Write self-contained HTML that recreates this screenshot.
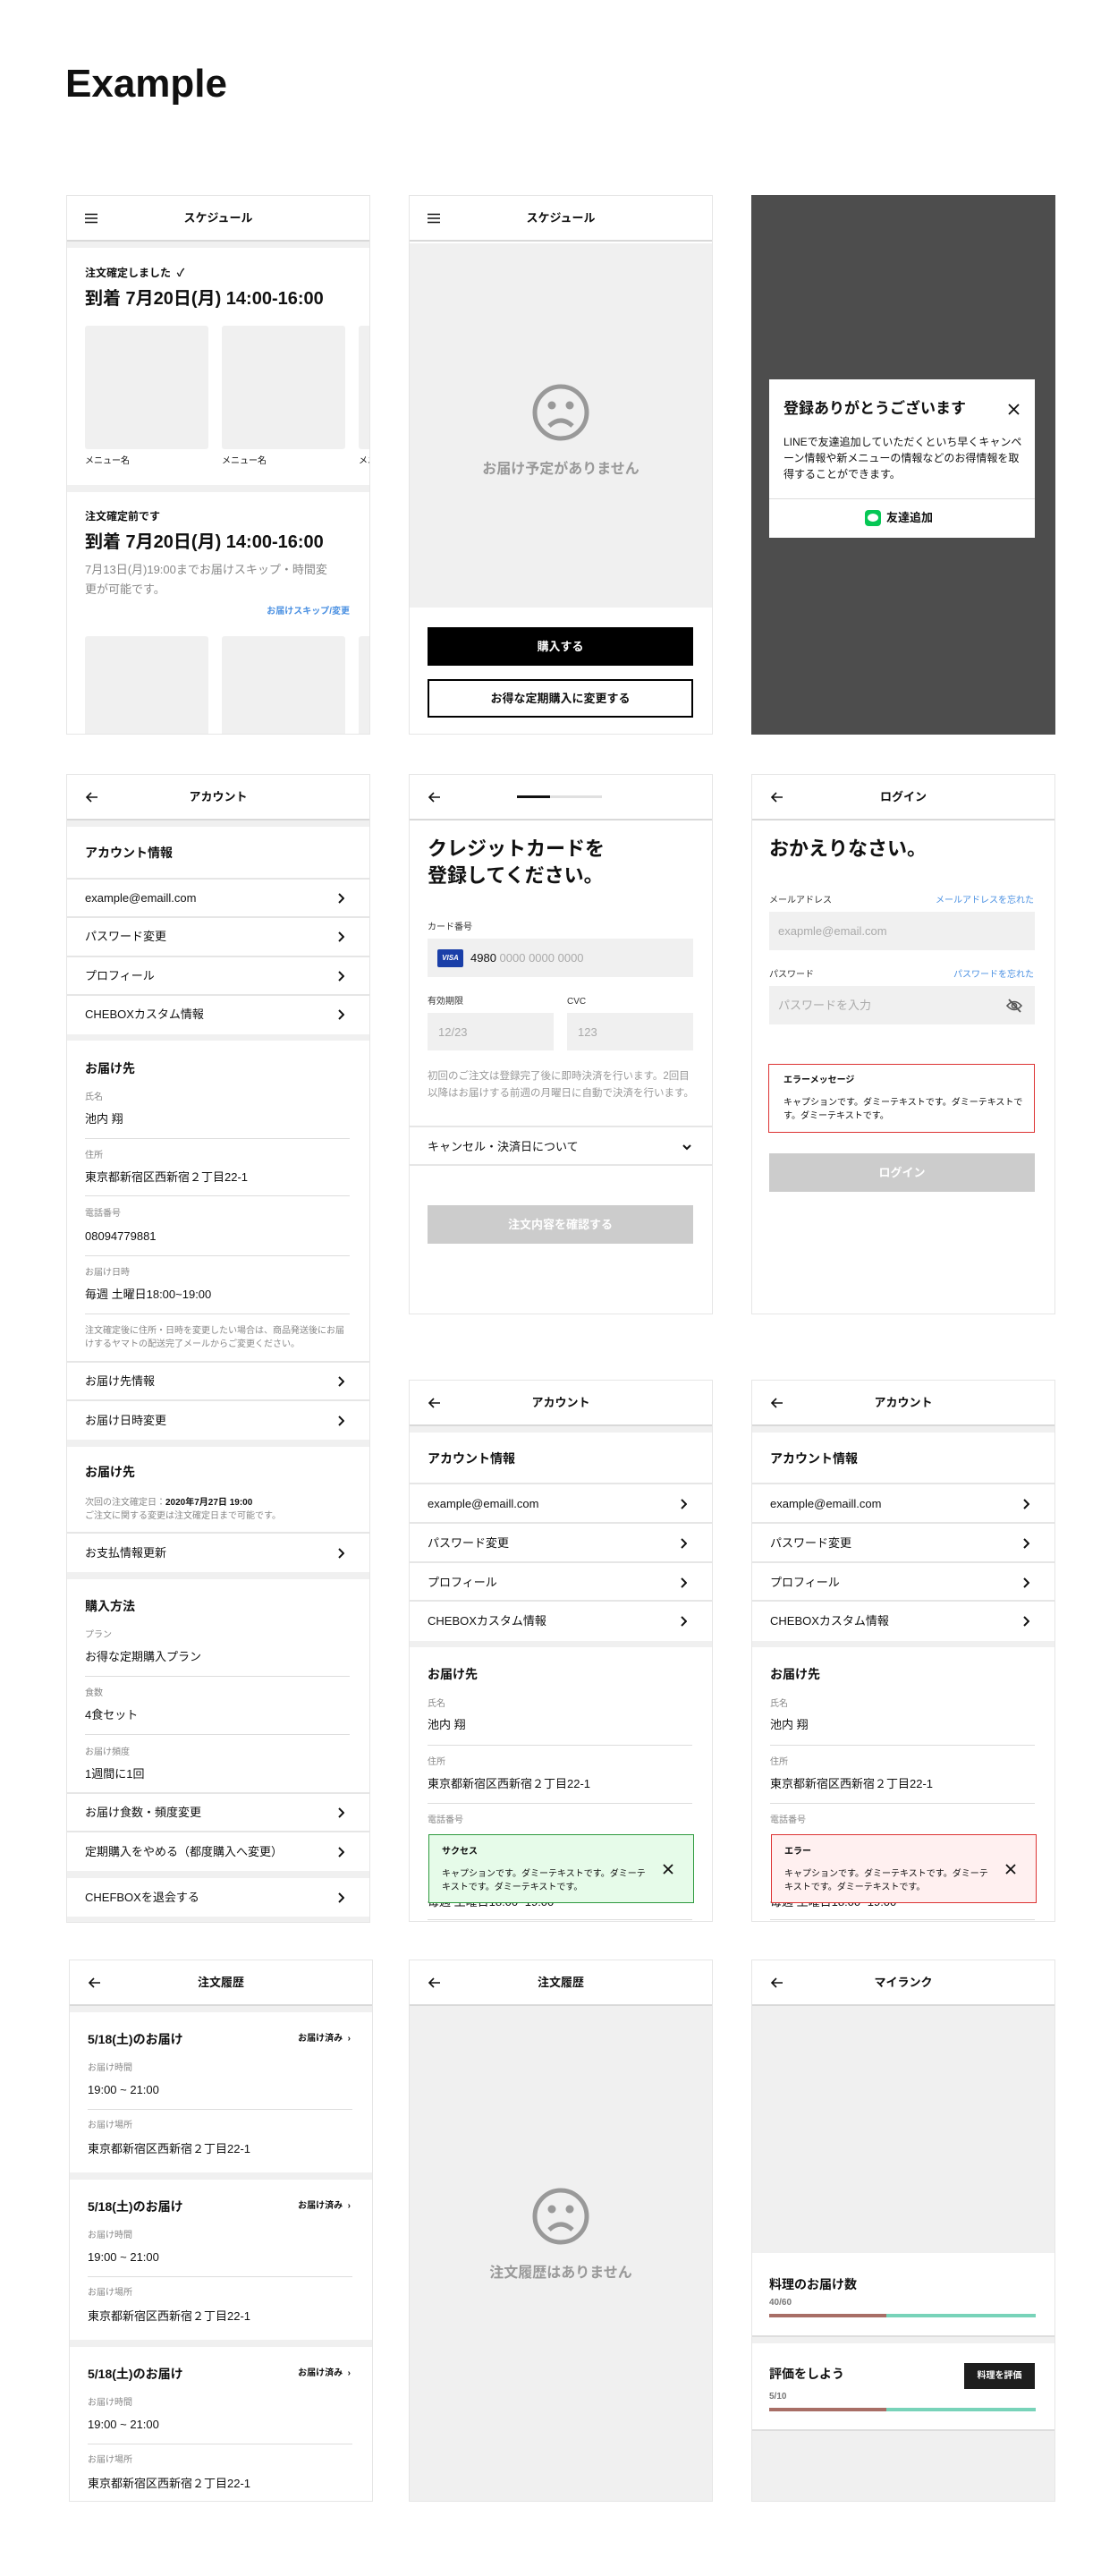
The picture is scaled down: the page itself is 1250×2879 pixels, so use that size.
<!DOCTYPE html>
<html><head><meta charset="utf-8">
<style>
*{margin:0;padding:0;box-sizing:border-box}
body{width:1250px;height:2879px;background:#fff;position:relative;font-family:"Liberation Sans","Noto Sans CJK JP",sans-serif;color:#111;overflow:hidden}
.p{position:absolute;width:340px;border:1px solid #e6e6e6;background:#f0f0f0;overflow:hidden}
.w{position:absolute;left:0;right:0;background:#fff}
.hd{position:absolute;left:0;right:0;top:0;height:51px;background:#fff;border-bottom:2px solid #d9d9d9}
.hd .tt{position:absolute;left:0;right:0;top:18px;text-align:center;font-size:13px;font-weight:bold;line-height:1}
.hd svg{position:absolute;left:20px;top:19px}
.t{position:absolute;white-space:nowrap;line-height:1}
.b{font-weight:bold}
.lb{font-size:10px;color:#888}
.v{font-size:13px}
.dv{position:absolute;left:20px;right:22px;height:1px;background:#ddd}
.fd{position:absolute;left:0;right:0;height:2px;background:#e6e6e6}
.ch{position:absolute;right:28px}
.box{position:absolute;background:#f0f0f0;border-radius:3px}
</style></head><body>

<div class="t b" style="left:73px;top:72px;font-size:44px">Example</div>

<!-- ROW 1 -->
<div class="p" style="left:74px;top:218px;height:603px">
 <div class="hd"><svg width="14" height="12"><path d="M0 1.5h14M0 6h14M0 10.5h14" stroke="#111" stroke-width="1.6"/></svg><div class="tt">スケジュール</div></div>
 <div class="w" style="top:58px;height:265px"></div>
 <div class="w" style="top:331px;height:280px"></div>
 <div class="t b" style="left:20px;top:80px;font-size:12px">注文確定しました&nbsp;&nbsp;✓</div>
 <div class="t b" style="left:20px;top:105px;font-size:20px">到着 7月20日(月) 14:00-16:00</div>
 <div class="box" style="left:20px;top:145px;width:138px;height:138px"></div>
 <div class="box" style="left:173px;top:145px;width:138px;height:138px"></div>
 <div class="box" style="left:326px;top:145px;width:138px;height:138px"></div>
 <div class="t" style="left:20px;top:292px;font-size:10px">メニュー名</div>
 <div class="t" style="left:173px;top:292px;font-size:10px">メニュー名</div>
 <div class="t" style="left:326px;top:292px;font-size:10px">メニュー名</div>
 <div class="t b" style="left:20px;top:352px;font-size:12px">注文確定前です</div>
 <div class="t b" style="left:20px;top:377px;font-size:20px">到着 7月20日(月) 14:00-16:00</div>
 <div class="t" style="left:20px;top:411px;font-size:13px;color:#888">7月13日(月)19:00までお届けスキップ・時間変</div>
 <div class="t" style="left:20px;top:433px;font-size:13px;color:#888">更が可能です。</div>
 <div class="t b" style="right:22px;top:460px;font-size:10px;color:#4a90e2">お届けスキップ/変更</div>
 <div class="box" style="left:20px;top:492px;width:138px;height:138px"></div>
 <div class="box" style="left:173px;top:492px;width:138px;height:138px"></div>
 <div class="box" style="left:326px;top:492px;width:138px;height:138px"></div>
</div>

<div class="p" style="left:457px;top:218px;height:603px;background:#fff">
 <div class="hd"><svg width="14" height="12"><path d="M0 1.5h14M0 6h14M0 10.5h14" stroke="#111" stroke-width="1.6"/></svg><div class="tt">スケジュール</div></div>
 <div style="position:absolute;left:0;right:0;top:53px;height:407px;background:#f0f0f0"></div>
 <svg style="position:absolute;left:137px;top:210px" width="64" height="64"><circle cx="32" cy="32" r="29" fill="none" stroke="#999" stroke-width="5"/><circle cx="22" cy="24" r="4.5" fill="#999"/><circle cx="42" cy="24" r="4.5" fill="#999"/><path d="M19 47q13-12 26 0" fill="none" stroke="#999" stroke-width="5"/></svg>
 <div class="t b" style="left:0;right:0;text-align:center;top:298px;font-size:16px;color:#999">お届け予定がありません</div>
 <div class="t b" style="left:20px;width:297px;top:482px;height:43px;line-height:43px;background:#000;color:#fff;text-align:center;font-size:13px">購入する</div>
 <div class="t b" style="left:20px;width:297px;top:540px;height:43px;line-height:39px;border:2px solid #000;text-align:center;font-size:13px">お得な定期購入に変更する</div>
</div>

<div class="p" style="left:840px;top:218px;height:603px;background:#4d4d4d;border-color:#4d4d4d">
 <div style="position:absolute;left:19px;top:205px;width:297px;height:177px;background:#fff">
  <div class="t b" style="left:16px;top:24px;font-size:17px">登録ありがとうございます</div>
  <svg style="position:absolute;right:17px;top:27px" width="13" height="13"><path d="M1 1l11 11M12 1L1 12" stroke="#111" stroke-width="1.8"/></svg>
  <div style="position:absolute;left:16px;right:14px;top:61px;font-size:12px;line-height:18px">LINEで友達追加していただくといち早くキャンペーン情報や新メニューの情報などのお得情報を取得することができます。</div>
  <div style="position:absolute;left:0;right:0;top:133px;height:1px;background:#ddd"></div>
  <div style="position:absolute;left:107px;top:146px;width:18px;height:18px;border-radius:4px;background:#06c755"><div style="position:absolute;left:3px;top:4px;width:12px;height:9px;border-radius:50%;background:#fff"></div></div>
  <div class="t b" style="left:131px;top:148px;font-size:13px">友達追加</div>
 </div>
</div>

<!-- ROW 2 -->
<div class="p" style="left:74px;top:865px;height:1284px">
 <div class="hd"><svg width="14" height="12"><path d="M7 1L2 6l5 5M2 6h12" stroke="#111" stroke-width="1.6" fill="none"/></svg><div class="tt">アカウント</div></div>
 <div class="w" style="top:58px;height:232px"></div>
 <div class="t b" style="left:20px;top:80px;font-size:14px">アカウント情報</div>
 <div class="fd" style="top:115px"></div><div class="fd" style="top:158px"></div><div class="fd" style="top:202px"></div><div class="fd" style="top:245px"></div>
 <div class="t v" style="left:20px;top:131px">example@emaill.com</div>
 <div class="t v" style="left:20px;top:174px">パスワード変更</div>
 <div class="t v" style="left:20px;top:218px">プロフィール</div>
 <div class="t v" style="left:20px;top:261px">CHEBOXカスタム情報</div>
 <svg class="ch" style="top:132px" width="8" height="12"><path d="M2 1l5 5-5 5" stroke="#111" stroke-width="2" fill="none"/></svg>
 <svg class="ch" style="top:175px" width="8" height="12"><path d="M2 1l5 5-5 5" stroke="#111" stroke-width="2" fill="none"/></svg>
 <svg class="ch" style="top:219px" width="8" height="12"><path d="M2 1l5 5-5 5" stroke="#111" stroke-width="2" fill="none"/></svg>
 <svg class="ch" style="top:262px" width="8" height="12"><path d="M2 1l5 5-5 5" stroke="#111" stroke-width="2" fill="none"/></svg>

 <div class="w" style="top:297px;height:446px"></div>
 <div class="t b" style="left:20px;top:321px;font-size:14px">お届け先</div>
 <div class="t lb" style="left:20px;top:356px">氏名</div><div class="t v" style="left:20px;top:378px">池内 翔</div><div class="dv" style="top:406px"></div>
 <div class="t lb" style="left:20px;top:421px">住所</div><div class="t v" style="left:20px;top:443px">東京都新宿区西新宿２丁目22-1</div><div class="dv" style="top:470px"></div>
 <div class="t lb" style="left:20px;top:486px">電話番号</div><div class="t v" style="left:20px;top:509px">08094779881</div><div class="dv" style="top:537px"></div>
 <div class="t lb" style="left:20px;top:552px">お届け日時</div><div class="t v" style="left:20px;top:574px">毎週 土曜日18:00~19:00</div><div class="dv" style="top:602px"></div>
 <div class="t lb" style="left:20px;top:617px">注文確定後に住所・日時を変更したい場合は、商品発送後にお届</div>
 <div class="t lb" style="left:20px;top:632px">けするヤマトの配送完了メールからご変更ください。</div>
 <div class="fd" style="top:655px"></div>
 <div class="t v" style="left:20px;top:671px">お届け先情報</div>
 <svg class="ch" style="top:672px" width="8" height="12"><path d="M2 1l5 5-5 5" stroke="#111" stroke-width="2" fill="none"/></svg>
 <div class="fd" style="top:698px"></div>
 <div class="t v" style="left:20px;top:715px">お届け日時変更</div>
 <svg class="ch" style="top:716px" width="8" height="12"><path d="M2 1l5 5-5 5" stroke="#111" stroke-width="2" fill="none"/></svg>

 <div class="w" style="top:751px;height:140px"></div>
 <div class="t b" style="left:20px;top:772px;font-size:14px">お届け先</div>
 <div class="t lb" style="left:20px;top:809px">次回の注文確定日：<b style="color:#111">2020年7月27日 19:00</b></div>
 <div class="t lb" style="left:20px;top:824px">ご注文に関する変更は注文確定日まで可能です。</div>
 <div class="fd" style="top:846px"></div>
 <div class="t v" style="left:20px;top:863px">お支払情報更新</div>
 <svg class="ch" style="top:864px" width="8" height="12"><path d="M2 1l5 5-5 5" stroke="#111" stroke-width="2" fill="none"/></svg>

 <div class="w" style="top:899px;height:326px"></div>
 <div class="t b" style="left:20px;top:922px;font-size:14px">購入方法</div>
 <div class="t lb" style="left:20px;top:957px">プラン</div><div class="t v" style="left:20px;top:979px">お得な定期購入プラン</div><div class="dv" style="top:1007px"></div>
 <div class="t lb" style="left:20px;top:1022px">食数</div><div class="t v" style="left:20px;top:1044px">4食セット</div><div class="dv" style="top:1072px"></div>
 <div class="t lb" style="left:20px;top:1088px">お届け頻度</div><div class="t v" style="left:20px;top:1110px">1週間に1回</div>
 <div class="fd" style="top:1137px"></div>
 <div class="t v" style="left:20px;top:1153px">お届け食数・頻度変更</div>
 <svg class="ch" style="top:1154px" width="8" height="12"><path d="M2 1l5 5-5 5" stroke="#111" stroke-width="2" fill="none"/></svg>
 <div class="fd" style="top:1180px"></div>
 <div class="t v" style="left:20px;top:1197px">定期購入をやめる（都度購入へ変更）</div>
 <svg class="ch" style="top:1198px" width="8" height="12"><path d="M2 1l5 5-5 5" stroke="#111" stroke-width="2" fill="none"/></svg>

 <div class="w" style="top:1233px;height:43px"></div>
 <div class="t v" style="left:20px;top:1248px">CHEFBOXを退会する</div>
 <svg class="ch" style="top:1249px" width="8" height="12"><path d="M2 1l5 5-5 5" stroke="#111" stroke-width="2" fill="none"/></svg>
</div>

<div class="p" style="left:457px;top:865px;height:604px;background:#fff">
 <div class="hd"><svg width="14" height="12"><path d="M7 1L2 6l5 5M2 6h12" stroke="#111" stroke-width="1.6" fill="none"/></svg>
  <div style="position:absolute;left:120px;top:23px;width:95px;height:3px;background:#e0e0e0"></div>
  <div style="position:absolute;left:120px;top:23px;width:37px;height:3px;background:#111"></div></div>
 <div class="t b" style="left:20px;top:72px;font-size:22px">クレジットカードを</div>
 <div class="t b" style="left:20px;top:102px;font-size:22px">登録してください。</div>
 <div class="t" style="left:20px;top:166px;font-size:10px;color:#333">カード番号</div>
 <div class="box" style="left:20px;top:183px;width:297px;height:43px;border-radius:0"></div>
 <div class="t b" style="left:31px;top:195px;width:29px;height:20px;line-height:20px;background:#1a3fa8;color:#fff;font-size:8px;text-align:center;border-radius:2px;font-style:italic">VISA</div>
 <div class="t" style="left:68px;top:198px;font-size:13px">4980 <span style="color:#aaa">0000 0000 0000</span></div>
 <div class="t" style="left:20px;top:249px;font-size:10px;color:#333">有効期限</div>
 <div class="t" style="left:176px;top:249px;font-size:10px;color:#333">CVC</div>
 <div class="box" style="left:20px;top:266px;width:141px;height:42px;border-radius:0"></div>
 <div class="box" style="left:176px;top:266px;width:141px;height:42px;border-radius:0"></div>
 <div class="t" style="left:32px;top:281px;font-size:13px;color:#aaa">12/23</div>
 <div class="t" style="left:188px;top:281px;font-size:13px;color:#aaa">123</div>
 <div style="position:absolute;left:20px;width:300px;top:328px;font-size:11.5px;line-height:18.5px;color:#999">初回のご注文は登録完了後に即時決済を行います。2回目以降はお届けする前週の月曜日に自動で決済を行います。</div>
 <div class="fd" style="top:392px"></div>
 <div class="t v" style="left:20px;top:409px">キャンセル・決済日について</div>
 <svg style="position:absolute;right:23px;top:413px" width="10" height="7"><path d="M1 1l4 4 4-4" stroke="#111" stroke-width="2" fill="none"/></svg>
 <div class="fd" style="top:435px"></div>
 <div class="t b" style="left:20px;width:297px;top:481px;height:43px;line-height:43px;background:#ccc;color:#fff;text-align:center;font-size:13px">注文内容を確認する</div>
</div>

<div class="p" style="left:840px;top:865px;height:604px;background:#fff">
 <div class="hd"><svg width="14" height="12"><path d="M7 1L2 6l5 5M2 6h12" stroke="#111" stroke-width="1.6" fill="none"/></svg><div class="tt">ログイン</div></div>
 <div class="t b" style="left:19px;top:72px;font-size:22px">おかえりなさい。</div>
 <div class="t" style="left:19px;top:136px;font-size:10px;color:#333">メールアドレス</div>
 <div class="t" style="right:23px;top:136px;font-size:10px;color:#4a90e2">メールアドレスを忘れた</div>
 <div class="box" style="left:19px;top:153px;width:297px;height:43px;border-radius:0"></div>
 <div class="t" style="left:29px;top:168px;font-size:13px;color:#aaa">exapmle@email.com</div>
 <div class="t" style="left:19px;top:219px;font-size:10px;color:#333">パスワード</div>
 <div class="t" style="right:23px;top:219px;font-size:10px;color:#4a90e2">パスワードを忘れた</div>
 <div class="box" style="left:19px;top:236px;width:297px;height:43px;border-radius:0"></div>
 <div class="t" style="left:29px;top:251px;font-size:13px;color:#aaa">パスワードを入力</div>
 <svg style="position:absolute;left:284px;top:250px" width="18" height="16"><path d="M1 8q8-9 16 0q-8 9-16 0z" fill="none" stroke="#555" stroke-width="1.6"/><circle cx="9" cy="8" r="2.6" fill="none" stroke="#555" stroke-width="1.6"/><path d="M3 1l13 14" stroke="#555" stroke-width="1.8"/></svg>
 <div style="position:absolute;left:18px;top:323px;width:298px;height:77px;border:1px solid #d33"></div>
 <div class="t b" style="left:35px;top:337px;font-size:10px">エラーメッセージ</div>
 <div style="position:absolute;left:35px;width:272px;top:359px;font-size:10px;line-height:15px">キャプションです。ダミーテキストです。ダミーテキストです。ダミーテキストです。</div>
 <div class="t b" style="left:19px;width:297px;top:423px;height:43px;line-height:43px;background:#ccc;color:#fff;text-align:center;font-size:13px">ログイン</div>
</div>

<!-- ROW 2b -->
<div class="p" style="left:457px;top:1542px;height:606px">
 <div class="hd"><svg width="14" height="12"><path d="M7 1L2 6l5 5M2 6h12" stroke="#111" stroke-width="1.6" fill="none"/></svg><div class="tt">アカウント</div></div>
 <div class="w" style="top:58px;height:233px"></div>
 <div class="t b" style="left:20px;top:80px;font-size:14px">アカウント情報</div>
 <div class="fd" style="top:114px"></div><div class="fd" style="top:158px"></div><div class="fd" style="top:202px"></div><div class="fd" style="top:245px"></div>
 <div class="t v" style="left:20px;top:131px">example@emaill.com</div>
 <div class="t v" style="left:20px;top:175px">パスワード変更</div>
 <div class="t v" style="left:20px;top:219px">プロフィール</div>
 <div class="t v" style="left:20px;top:262px">CHEBOXカスタム情報</div>
 <svg class="ch" style="top:132px" width="8" height="12"><path d="M2 1l5 5-5 5" stroke="#111" stroke-width="2" fill="none"/></svg>
 <svg class="ch" style="top:176px" width="8" height="12"><path d="M2 1l5 5-5 5" stroke="#111" stroke-width="2" fill="none"/></svg>
 <svg class="ch" style="top:220px" width="8" height="12"><path d="M2 1l5 5-5 5" stroke="#111" stroke-width="2" fill="none"/></svg>
 <svg class="ch" style="top:263px" width="8" height="12"><path d="M2 1l5 5-5 5" stroke="#111" stroke-width="2" fill="none"/></svg>
 <div class="w" style="top:298px;height:310px"></div>
 <div class="t b" style="left:20px;top:321px;font-size:14px">お届け先</div>
 <div class="t lb" style="left:20px;top:357px">氏名</div><div class="t v" style="left:20px;top:378px">池内 翔</div><div class="dv" style="top:407px"></div>
 <div class="t lb" style="left:20px;top:422px">住所</div><div class="t v" style="left:20px;top:444px">東京都新宿区西新宿２丁目22-1</div><div class="dv" style="top:472px"></div>
 <div class="t lb" style="left:20px;top:487px">電話番号</div>
 <div class="t v" style="left:20px;top:576px">毎週 土曜日18:00~19:00</div>
 <div class="dv" style="top:602px"></div>
 <div style="position:absolute;left:21px;top:507px;width:297px;height:77px;background:#e6fbe9;border:1px solid #2e9a3e"></div>
 <div class="t b" style="left:36px;top:522px;font-size:10px">サクセス</div>
 <div style="position:absolute;left:36px;width:230px;top:544px;font-size:10px;line-height:15px">キャプションです。ダミーテキストです。ダミーテキストです。ダミーテキストです。</div>
 <svg style="position:absolute;left:283px;top:540px" width="12" height="12"><path d="M1 1l10 10M11 1L1 11" stroke="#111" stroke-width="1.8"/></svg>
</div>

<div class="p" style="left:840px;top:1542px;height:606px">
 <div class="hd"><svg width="14" height="12"><path d="M7 1L2 6l5 5M2 6h12" stroke="#111" stroke-width="1.6" fill="none"/></svg><div class="tt">アカウント</div></div>
 <div class="w" style="top:58px;height:233px"></div>
 <div class="t b" style="left:20px;top:80px;font-size:14px">アカウント情報</div>
 <div class="fd" style="top:114px"></div><div class="fd" style="top:158px"></div><div class="fd" style="top:202px"></div><div class="fd" style="top:245px"></div>
 <div class="t v" style="left:20px;top:131px">example@emaill.com</div>
 <div class="t v" style="left:20px;top:175px">パスワード変更</div>
 <div class="t v" style="left:20px;top:219px">プロフィール</div>
 <div class="t v" style="left:20px;top:262px">CHEBOXカスタム情報</div>
 <svg class="ch" style="top:132px" width="8" height="12"><path d="M2 1l5 5-5 5" stroke="#111" stroke-width="2" fill="none"/></svg>
 <svg class="ch" style="top:176px" width="8" height="12"><path d="M2 1l5 5-5 5" stroke="#111" stroke-width="2" fill="none"/></svg>
 <svg class="ch" style="top:220px" width="8" height="12"><path d="M2 1l5 5-5 5" stroke="#111" stroke-width="2" fill="none"/></svg>
 <svg class="ch" style="top:263px" width="8" height="12"><path d="M2 1l5 5-5 5" stroke="#111" stroke-width="2" fill="none"/></svg>
 <div class="w" style="top:298px;height:310px"></div>
 <div class="t b" style="left:20px;top:321px;font-size:14px">お届け先</div>
 <div class="t lb" style="left:20px;top:357px">氏名</div><div class="t v" style="left:20px;top:378px">池内 翔</div><div class="dv" style="top:407px"></div>
 <div class="t lb" style="left:20px;top:422px">住所</div><div class="t v" style="left:20px;top:444px">東京都新宿区西新宿２丁目22-1</div><div class="dv" style="top:472px"></div>
 <div class="t lb" style="left:20px;top:487px">電話番号</div>
 <div class="t v" style="left:20px;top:576px">毎週 土曜日18:00~19:00</div>
 <div class="dv" style="top:602px"></div>
 <div style="position:absolute;left:21px;top:507px;width:297px;height:77px;background:#fff0f0;border:1px solid #d33"></div>
 <div class="t b" style="left:36px;top:522px;font-size:10px">エラー</div>
 <div style="position:absolute;left:36px;width:230px;top:544px;font-size:10px;line-height:15px">キャプションです。ダミーテキストです。ダミーテキストです。ダミーテキストです。</div>
 <svg style="position:absolute;left:283px;top:540px" width="12" height="12"><path d="M1 1l10 10M11 1L1 11" stroke="#111" stroke-width="1.8"/></svg>
</div>

<!-- ROW 3 -->
<div class="p" style="left:77px;top:2190px;height:606px">
 <div class="hd"><svg width="14" height="12"><path d="M7 1L2 6l5 5M2 6h12" stroke="#111" stroke-width="1.6" fill="none"/></svg><div class="tt">注文履歴</div></div>
 <div class="w" style="top:58px;height:179px"></div>
 <div class="w" style="top:245px;height:179px"></div>
 <div class="w" style="top:432px;height:180px"></div>
 <div class="t b" style="left:20px;top:81px;font-size:14px">5/18(土)のお届け</div>
 <div class="t b" style="right:24px;top:83px;font-size:10px">お届け済み&nbsp;&nbsp;›</div>
 <div class="t lb" style="left:20px;top:116px">お届け時間</div><div class="t v" style="left:20px;top:138px">19:00 ~ 21:00</div><div class="dv" style="top:166px"></div>
 <div class="t lb" style="left:20px;top:180px">お届け場所</div><div class="t v" style="left:20px;top:204px">東京都新宿区西新宿２丁目22-1</div>
 <div class="t b" style="left:20px;top:268px;font-size:14px">5/18(土)のお届け</div>
 <div class="t b" style="right:24px;top:270px;font-size:10px">お届け済み&nbsp;&nbsp;›</div>
 <div class="t lb" style="left:20px;top:303px">お届け時間</div><div class="t v" style="left:20px;top:325px">19:00 ~ 21:00</div><div class="dv" style="top:353px"></div>
 <div class="t lb" style="left:20px;top:367px">お届け場所</div><div class="t v" style="left:20px;top:391px">東京都新宿区西新宿２丁目22-1</div>
 <div class="t b" style="left:20px;top:455px;font-size:14px">5/18(土)のお届け</div>
 <div class="t b" style="right:24px;top:457px;font-size:10px">お届け済み&nbsp;&nbsp;›</div>
 <div class="t lb" style="left:20px;top:490px">お届け時間</div><div class="t v" style="left:20px;top:512px">19:00 ~ 21:00</div><div class="dv" style="top:540px"></div>
 <div class="t lb" style="left:20px;top:554px">お届け場所</div><div class="t v" style="left:20px;top:578px">東京都新宿区西新宿２丁目22-1</div>
</div>

<div class="p" style="left:457px;top:2190px;height:606px">
 <div class="hd"><svg width="14" height="12"><path d="M7 1L2 6l5 5M2 6h12" stroke="#111" stroke-width="1.6" fill="none"/></svg><div class="tt">注文履歴</div></div>
 <svg style="position:absolute;left:137px;top:254px" width="64" height="64"><circle cx="32" cy="32" r="29" fill="none" stroke="#999" stroke-width="5"/><circle cx="22" cy="24" r="4.5" fill="#999"/><circle cx="42" cy="24" r="4.5" fill="#999"/><path d="M19 47q13-12 26 0" fill="none" stroke="#999" stroke-width="5"/></svg>
 <div class="t b" style="left:0;right:0;text-align:center;top:342px;font-size:16px;color:#999">注文履歴はありません</div>
</div>

<div class="p" style="left:840px;top:2190px;height:606px">
 <div class="hd"><svg width="14" height="12"><path d="M7 1L2 6l5 5M2 6h12" stroke="#111" stroke-width="1.6" fill="none"/></svg><div class="tt">マイランク</div></div>
 <div class="w" style="top:327px;height:94px;border-bottom:2px solid #ddd"></div>
 <div class="w" style="top:428px;height:98px;border-bottom:2px solid #ddd"></div>
 <div class="t b" style="left:19px;top:355px;font-size:14px">料理のお届け数</div>
 <div class="t b" style="left:19px;top:378px;font-size:10px;color:#777">40/60</div>
 <div style="position:absolute;left:19px;top:395px;width:131px;height:4px;background:#a86e66"></div>
 <div style="position:absolute;left:150px;top:395px;width:167px;height:4px;background:#78d3b9"></div>
 <div class="t b" style="left:19px;top:455px;font-size:14px">評価をしよう</div>
 <div class="t b" style="left:237px;top:450px;width:79px;height:29px;line-height:29px;background:#1e1e1e;color:#fff;font-size:10px;text-align:center">料理を評価</div>
 <div class="t b" style="left:19px;top:483px;font-size:10px;color:#777">5/10</div>
 <div style="position:absolute;left:19px;top:500px;width:131px;height:4px;background:#a86e66"></div>
 <div style="position:absolute;left:150px;top:500px;width:167px;height:4px;background:#78d3b9"></div>
</div>

</body></html>
